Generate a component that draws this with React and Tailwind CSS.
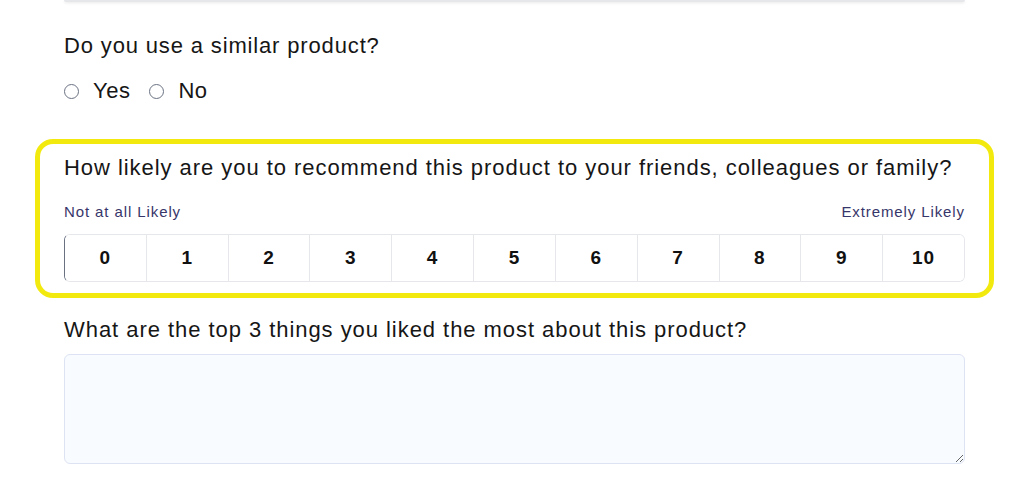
const font = { fontFamily: '"Liberation Sans", Arial, sans-serif' };

const scores = [0, 1, 2, 3, 4, 5, 6, 7, 8, 9, 10];

function Radio({ label }) {
  return (
    <label className="flex items-center gap-[14px]">
      <span className="w-[15px] h-[15px] rounded-full border border-gray-500 bg-white"></span>
      <span className="text-[22px] leading-7 text-[#161616] tracking-[0.5px]">{label}</span>
    </label>
  );
}

export default function App() {
  return (
    <div className="w-[1024px] h-[483px] bg-white overflow-hidden" style={font}>
      <div className="mx-[64px] w-[901px]">
        <div className="h-[2px] bg-gray-200 rounded-b-md shadow-sm"></div>

        <p className="mt-[30px] text-[22px] leading-7 text-[#161616] tracking-[0.85px]">Do you use a similar product?</p>
        <div className="mt-[17px] flex items-center gap-[19px]">
          <Radio label="Yes" />
          <Radio label="No" />
        </div>

        <div className="mt-[34px] -mx-[29px] px-[24px] pt-[10px] pb-[11px] border-[5px] border-[#f2ea0f] rounded-[18px]">
          <p className="text-[22px] leading-7 text-[#161616] tracking-[0.95px] whitespace-nowrap">
            How likely are you to recommend this product to your friends, colleagues or family?
          </p>
          <div className="mt-[20px] flex justify-between text-[15px] leading-5 text-[#37366a] tracking-[0.9px]">
            <span>Not at all Likely</span>
            <span>Extremely Likely</span>
          </div>
          <div className="mt-[12px] flex h-[48px] border border-gray-200 border-l-gray-500 rounded-md overflow-hidden">
            {scores.map((n) => (
              <button
                key={n}
                className="flex-1 flex items-center justify-center text-[19px] font-bold text-[#111] tracking-[1px] border-l border-gray-200 first:border-l-0 bg-white"
              >
                {n}
              </button>
            ))}
          </div>
        </div>

        <p className="mt-[18px] text-[22px] leading-7 text-[#161616] tracking-[0.95px]">
          What are the top 3 things you liked the most about this product?
        </p>
        <textarea className="mt-[10px] block w-full h-[110px] bg-[#f8fbff] border border-[#dde3f3] rounded-md"></textarea>
      </div>
    </div>
  );
}
